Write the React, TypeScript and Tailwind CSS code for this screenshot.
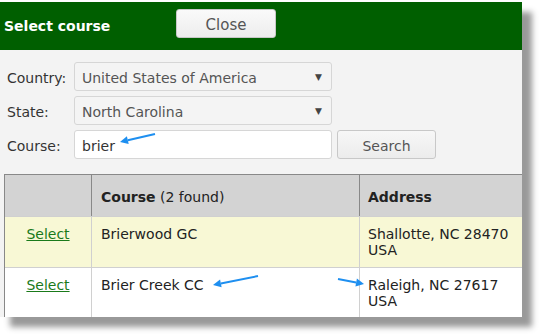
import React from "react";

const font = { fontFamily: '"DejaVu Sans", Verdana, sans-serif' };

function Arrow({ className, x1, y1, x2, y2 }: { className: string; x1: number; y1: number; x2: number; y2: number }) {
  // small blue annotation arrow, head at (x2, y2)
  const ang = Math.atan2(y2 - y1, x2 - x1);
  const hl = 8;
  const hw = 4;
  const bx = x2 - hl * Math.cos(ang);
  const by = y2 - hl * Math.sin(ang);
  const px = -Math.sin(ang) * hw;
  const py = Math.cos(ang) * hw;
  return (
    <svg className={className} width="60" height="30" viewBox="0 0 60 30">
      <line x1={x1} y1={y1} x2={bx} y2={by} stroke="#1e8ff0" strokeWidth="2" />
      <polygon points={`${x2},${y2} ${bx + px},${by + py} ${bx - px},${by - py}`} fill="#1e8ff0" />
    </svg>
  );
}

function SelectBox({ value }: { value: string }) {
  return (
    <div className="flex h-[29px] w-[258px] items-center justify-between rounded-[3px] border border-[#d6d6d6] bg-[#f4f4f4] pl-[7px] pr-[9px] pt-[3px] text-[14px] text-[#555]">
      <span>{value}</span>
      <span className="text-[9px] text-[#444]">▼</span>
    </div>
  );
}

export default function App() {
  return (
    <div className="h-[336px] w-[543px] overflow-hidden bg-white pt-[2px]" style={font}>
      <div className="relative h-[315px] w-[522px] overflow-hidden bg-[#f3f3f3] shadow-[10px_10px_6px_#999]">
        <div className="flex h-[48px] items-start bg-[#005f00] pl-[4px] pt-[7px]">
          <div className="w-[172px] pt-[3px] text-[14px] font-bold leading-[29px] text-white">Select course</div>
          <button className="h-[29px] w-[100px] rounded-[3px] border border-[#c8c8c8] bg-gradient-to-b from-[#fafafa] to-[#ededed] pt-[3px] text-[15px] text-[#555]">
            Close
          </button>
        </div>

        <div className="flex flex-col gap-[5px] px-[7px] pb-[15px] pt-[12px] text-[14px] text-[#333]">
          <div className="flex items-center">
            <div className="w-[67px] pt-[3px]">Country:</div>
            <SelectBox value="United States of America" />
          </div>
          <div className="flex items-center">
            <div className="w-[67px] pt-[3px]">State:</div>
            <SelectBox value="North Carolina" />
          </div>
          <div className="flex items-center">
            <div className="w-[67px] pt-[3px]">Course:</div>
            <div className="relative flex h-[29px] w-[258px] items-center rounded-[3px] border border-[#d6d6d6] bg-white pl-[7px] pt-[3px]">
              <span>brier</span>
              <Arrow className="absolute left-[40px] top-[-5px]" x1={40} y1={8} x2={5} y2={16} />
            </div>
            <button className="ml-[5px] h-[29px] w-[99px] rounded-[3px] border border-[#c8c8c8] bg-gradient-to-b from-[#f7f7f7] to-[#ececec] pt-[3px] text-[14px] text-[#555]">
              Search
            </button>
          </div>
        </div>

        <div className="ml-[4px] w-[530px] border-l border-t border-[#888] text-[14px] text-[#222]">
          <div className="flex h-[41px] items-center bg-[#d3d3d3]">
            <div className="h-full w-[87px] border-r border-[#888]"></div>
            <div className="w-[267px] pl-[9px] pt-[3px]">
              <span className="font-bold">Course</span> (2 found)
            </div>
            <div className="flex h-full items-center border-l border-[#888] pl-[8px] pt-[3px] font-bold">Address</div>
          </div>
          <div className="flex h-[51px] border-t border-[#d0d0d0] bg-[#f8f8d5] leading-[16px]">
            <div className="w-[87px] border-r border-[#d0d0d0] pt-[9px] text-center">
              <a href="#" className="text-[#1a7a1a] underline">Select</a>
            </div>
            <div className="w-[267px] pl-[9px] pt-[9px]">Brierwood GC</div>
            <div className="border-l border-[#d0d0d0] pl-[8px] pt-[9px]">
              Shallotte, NC 28470
              <br />
              USA
            </div>
          </div>
          <div className="flex h-[51px] border-t border-[#d0d0d0] bg-white leading-[16px]">
            <div className="w-[87px] border-r border-[#d0d0d0] pt-[9px] text-center">
              <a href="#" className="text-[#1a7a1a] underline">Select</a>
            </div>
            <div className="relative w-[267px] pl-[9px] pt-[9px]">
              Brier Creek CC
              <Arrow className="absolute left-[114px] top-[-4px]" x1={52} y1={12} x2={7} y2={21} />
              <Arrow className="absolute left-[238px] top-[2px]" x1={8} y1={9} x2={34} y2={14} />
            </div>
            <div className="border-l border-[#d0d0d0] pl-[8px] pt-[9px]">
              Raleigh, NC 27617
              <br />
              USA
            </div>
          </div>
        </div>
      </div>
    </div>
  );
}
